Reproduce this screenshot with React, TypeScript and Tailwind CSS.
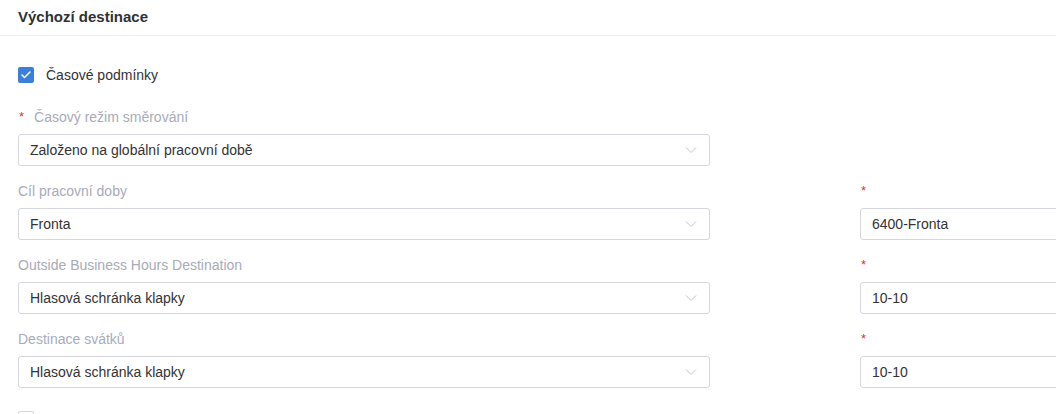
import { Check } from 'lucide-react'

type Row = {
  label: string
  required?: boolean
  value: string
  right?: string
}

const ROWS: Row[] = [
  { label: 'Časový režim směrování', required: true, value: 'Založeno na globální pracovní době' },
  { label: 'Cíl pracovní doby', value: 'Fronta', right: '6400-Fronta' },
  { label: 'Outside Business Hours Destination', value: 'Hlasová schránka klapky', right: '10-10' },
  { label: 'Destinace svátků', value: 'Hlasová schránka klapky', right: '10-10' },
]

function Chevron() {
  return (
    <svg width="12" height="8" viewBox="0 0 12 8" fill="none" className="shrink-0">
      <path d="M1 1.5 L6 6.5 L11 1.5" stroke="#c0c4cc" strokeWidth="1" />
    </svg>
  )
}

function Label({ text, required }: { text?: string; required?: boolean }) {
  return (
    <div className="flex h-[18px] items-center text-[14px] leading-[18px] text-[#a8abb8]">
      {required && <span className="mr-[10px] pl-[1px] text-[13px] text-[#e0303a]">*</span>}
      {text}
    </div>
  )
}

function Select({ value }: { value: string }) {
  return (
    <div className="mt-[8px] flex h-[32px] items-center justify-between rounded-[3px] border border-[#d6d6df] bg-white pl-[11px] pr-[12px] text-[14px] text-[#333333]">
      <span>{value}</span>
      <Chevron />
    </div>
  )
}

function Input({ value }: { value: string }) {
  return (
    <div className="mt-[8px] flex h-[32px] items-center rounded-[3px] border border-[#d6d6df] bg-white pl-[11px] text-[14px] text-[#333333]">
      {value}
    </div>
  )
}

export default function App() {
  return (
    <div
      className="h-[414px] w-[1056px] overflow-hidden bg-white"
      style={{ fontFamily: '"Liberation Sans", Arial, sans-serif' }}
    >
      <div className="flex h-[36px] items-center border-b border-[#eeeef2] px-[18px] pb-[1px]">
        <h2 className="text-[15px] font-bold text-[#303133]">Výchozí destinace</h2>
      </div>

      <div className="px-[18px] pt-[31px]">
        <label className="flex h-[16px] items-center gap-[12px]">
          <span className="flex h-[16px] w-[16px] items-center justify-center rounded-[2px] bg-[#3b7fdc]">
            <Check size={12} strokeWidth={3} color="white" />
          </span>
          <span className="pt-[1px] text-[14px] text-[#333333]">Časové podmínky</span>
        </label>

        <div className="mt-[25px] flex flex-col gap-[16px]">
          {ROWS.map(row => (
            <div key={row.label} className="flex gap-[150px]">
              <div className="w-[692px] shrink-0">
                <Label text={row.label} required={row.required} />
                <Select value={row.value} />
              </div>
              {row.right && (
                <div className="w-[692px] shrink-0">
                  <Label required />
                  <Input value={row.right} />
                </div>
              )}
            </div>
          ))}
        </div>

        <div className="mt-[23px] h-[16px] w-[16px] rounded-[2px] border border-[#d6d6df]" />
      </div>
    </div>
  )
}
